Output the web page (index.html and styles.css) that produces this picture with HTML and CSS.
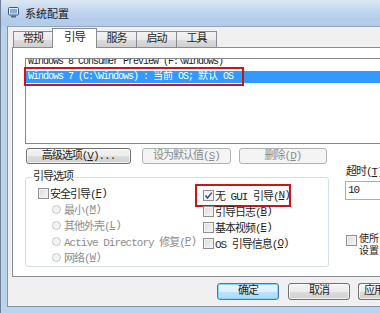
FILE: index.html
```html
<!DOCTYPE html>
<html lang="zh-CN">
<head>
<meta charset="utf-8">
<title>系统配置</title>
<link rel="stylesheet" href="styles.css">
</head>
<body>
<div class="window">
  <div class="titlebar">
    <svg class="appicon" width="11" height="11" viewBox="0 0 11 11"><rect x="0.5" y="0.5" width="10" height="7.5" rx="1" fill="#e4eefa" stroke="#35598f"/><rect x="2" y="2" width="7" height="4.5" fill="#86acd9"/><rect x="3" y="8.5" width="5" height="2" fill="#56698a"/></svg>
    <span class="title">系统配置</span>
  </div>
  <div class="client">
    <div class="tabs">
      <div class="tab">常规</div>
      <div class="tab sel">引导</div>
      <div class="tab">服务</div>
      <div class="tab">启动</div>
      <div class="tab">工具</div>
    </div>
    <div class="panel">
      <div class="listwrap">
        <div class="listbox">
          <div class="item first">Windows 8 Consumer Preview (F:\Windows)</div>
          <div class="item selected">Windows 7 (C:\Windows) : <span class="cjk">当前</span> OS; <span class="cjk">默认</span> OS</div>
        </div>
        <div class="mark mark-list"></div>
      </div>
      <div class="btnrow">
        <div class="btn b-adv">高级选项(<u>V</u>)...</div>
        <div class="btn dis b-def">设为默认值(<u>S</u>)</div>
        <div class="btn dis b-del">删除(<u>D</u>)</div>
      </div>
      <div class="lower">
        <fieldset class="group">
          <legend>引导选项</legend>
          <div class="cols">
            <div class="col left">
              <div class="row"><span class="cb"></span>安全引导(<u>F</u>)</div>
              <div class="row sub dim"><span class="rd"></span>最小(<u>M</u>)</div>
              <div class="row sub dim"><span class="rd"></span>其他外壳(<u>L</u>)</div>
              <div class="row sub dim"><span class="rd"></span>Active Directory 修复(<u>P</u>)</div>
              <div class="row sub dim"><span class="rd"></span>网络(<u>W</u>)</div>
            </div>
            <div class="col right">
              <div class="row marked"><span class="cb on"><svg width="11" height="11" viewBox="0 0 11 11"><path d="M2.5 5.5 L4.5 8 L8.8 2.6" fill="none" stroke="#3d4f8f" stroke-width="1.5"/></svg></span>无 GUI 引导(<u>N</u>)<span class="mark mark-gui"></span></div>
              <div class="row"><span class="cb"></span>引导日志(<u>B</u>)</div>
              <div class="row"><span class="cb"></span>基本视频(<u>E</u>)</div>
              <div class="row"><span class="cb"></span>OS 引导信息(<u>O</u>)</div>
            </div>
          </div>
        </fieldset>
        <div class="side">
          <div class="lbl">超时(<u>T</u>):</div>
          <div class="textbox">10</div>
          <div class="permrow"><span class="cb"></span><div class="permtext">使所<br>设置</div></div>
        </div>
      </div>
    </div>
    <div class="footer">
      <div class="btn fbtn default">确定</div>
      <div class="btn fbtn">取消</div>
      <div class="btn fbtn">应用(<u>A</u>)</div>
    </div>
  </div>
</div>
</body>
</html>
```
FILE: styles.css
```css
html, body {
  margin: 0;
  padding: 0;
}
body {
  width: 380px;
  height: 313px;
  overflow: hidden;
  background: #b9d1ea;
  font-family: "Liberation Mono", "Noto Sans CJK SC", monospace;
  font-size: 11px;
  letter-spacing: -1px;
  color: #1e1e1e;
}
.window {
  width: 440px;
  height: 313px;
  box-sizing: border-box;
  border-left: 1px solid #6f8096;
  padding-left: 6px;
  padding-bottom: 6px;
  display: flex;
  flex-direction: column;
  background: linear-gradient(180deg, #dbe6f4 0, #c9dbf0 8px, #b6cdea 18px, #b3cbe9 26px, #bcd3ec 27px, #bcd3ec 100%);
}
.titlebar {
  height: 26px;
  display: flex;
  align-items: center;
  gap: 6px;
  padding-left: 1px;
  box-sizing: border-box;
  padding-bottom: 1px;
}
.appicon {
  display: block;
}
.title {
  font-family: "Noto Sans CJK SC", sans-serif;
  font-size: 11px;
  letter-spacing: 0;
  color: #1b1b1b;
}
.client {
  flex: 1;
  background: #f0f0f0;
  border-left: 1px solid #8093a8;
  border-top: 1px solid #93a6bb;
  border-bottom: 1px solid #7f93a9;
  padding-left: 4px;
  display: flex;
  flex-direction: column;
}
.tabs {
  height: 20px;
  display: flex;
  align-items: flex-end;
  padding-left: 1px;
}
.tab {
  position: relative;
  box-sizing: border-box;
  width: 41px;
  height: 16px;
  margin-left: -1px;
  border: 1px solid #898c95;
  border-bottom: none;
  background: linear-gradient(180deg, #f3f3f3 0, #ebebeb 50%, #dddddd 51%, #cfcfcf 100%);
  text-align: center;
  line-height: 15px;
}
.tab:first-child {
  margin-left: 0;
  width: 40px;
}
.tab.sel {
  width: 45px;
  height: 20px;
  margin-bottom: -1px;
  background: #ffffff;
  z-index: 1;
  line-height: 18px;
  font-size: 11.5px;
}
.panel {
  box-sizing: border-box;
  height: 230px;
  border: 1px solid #898c95;
  border-right: none;
  background: #ffffff;
  padding: 10px 0 0 12px;
}
.listwrap {
  position: relative;
}
.listbox {
  box-sizing: border-box;
  width: 420px;
  height: 86px;
  border: 1px solid #828790;
  overflow: hidden;
  background: #fff;
}
.item {
  height: 12px;
  line-height: 12px;
  padding-left: 2px;
  white-space: nowrap;
  font-size: 10px;
  letter-spacing: -1px;
}
.item.first {
  height: 14px;
  line-height: 10px;
  margin-top: -2px;
}
.item.selected {
  background: #3399ff;
  color: #ffffff;
}
.cjk {
  letter-spacing: 0;
}
.mark {
  position: absolute;
  box-sizing: border-box;
  border: 2px solid #c8161d;
}
.mark-list {
  left: -1px;
  top: 9px;
  width: 220px;
  height: 19px;
}
.btnrow {
  display: flex;
  margin-top: 4px;
  padding-left: 1px;
}
.btn {
  box-sizing: border-box;
  height: 16px;
  border: 1px solid #707070;
  border-radius: 3px;
  background: linear-gradient(180deg, #f4f4f4 0, #ececec 50%, #dddddd 51%, #d0d0d0 100%);
  box-shadow: inset 0 0 0 1px rgba(255,255,255,0.7);
  text-align: center;
  line-height: 14px;
  white-space: nowrap;
}
.btn.dis {
  border-color: #adb2b5;
  background: #f4f4f4;
  color: #8b8b8b;
  box-shadow: none;
}
.b-adv { width: 105px; }
.b-def { width: 89px; margin-left: 11px; }
.b-del { width: 88px; margin-left: 8px; }
.lower {
  display: flex;
  align-items: flex-start;
}
.group {
  box-sizing: border-box;
  width: 304px;
  margin: 6px 0 0 0;
  padding: 0 0 0 12px;
  min-width: 0;
  border: 1px solid #d5dfe5;
  border-radius: 3px;
}
.group legend {
  padding: 0 1px;
  margin-left: -6px;
  line-height: 14px;
}
.cols {
  display: flex;
  height: 82px;
}
.col.left {
  width: 165px;
  padding-top: 1px;
}
.col.right {
  padding-top: 3px;
}
.row {
  position: relative;
  height: 16px;
  display: flex;
  align-items: center;
  white-space: nowrap;
}
.row.sub {
  padding-left: 14px;
}
.dim {
  color: #8d8d8d;
}
.cb {
  box-sizing: border-box;
  flex: none;
  width: 11px;
  height: 11px;
  margin-right: 1px;
  border: 1px solid #8f8f8f;
  background: linear-gradient(135deg, #dcdcdc 0, #f6f6f6 100%);
  box-shadow: inset 0 0 0 1px #f2f2f2;
  position: relative;
}
.cb.on {
  background: #f4f4f4;
}
.cb svg {
  position: absolute;
  left: -1px;
  top: -1px;
}
.rd {
  box-sizing: border-box;
  flex: none;
  width: 9px;
  height: 9px;
  margin-right: 3px;
  border: 1px solid #c9c9c9;
  border-radius: 50%;
  background: #f3f3f3;
}
.mark-gui {
  left: -8px;
  top: -3px;
  width: 96px;
  height: 23px;
}
.side {
  margin-left: 16px;
  margin-top: 1px;
}
.lbl {
  line-height: 14px;
  padding-left: 1px;
}
.textbox {
  box-sizing: border-box;
  width: 36px;
  height: 19px;
  margin-top: 2px;
  border: 1px solid #abadb3;
  border-right: none;
  background: #fff;
  padding-left: 2px;
  line-height: 17px;
}
.permrow {
  display: flex;
  align-items: flex-start;
  margin-top: 34px;
  padding-left: 1px;
}
.permrow .cb {
  margin-top: 1px;
  margin-right: 2px;
}
.permtext {
  line-height: 12px;
  white-space: nowrap;
  letter-spacing: 0;
  font-size: 10px;
}
.footer {
  display: flex;
  padding-top: 6px;
  padding-left: 205px;
}
.fbtn {
  width: 62px;
  height: 17px;
  line-height: 15px;
  margin-right: 8px;
}
.fbtn.default {
  border-color: #3c7fb1;
  background: linear-gradient(180deg, #eaf6fd 0, #d9f0fc 50%, #bee6fd 51%, #a7d9f5 100%);
  box-shadow: inset 0 0 0 1px #8fd0f5;
  margin-right: 9px;
}
.fbtn:last-child {
  width: 24px;
  overflow: hidden;
  text-align: left;
  padding-left: 5px;
  border-right: none;
  border-top-right-radius: 0;
  border-bottom-right-radius: 0;
}
```
